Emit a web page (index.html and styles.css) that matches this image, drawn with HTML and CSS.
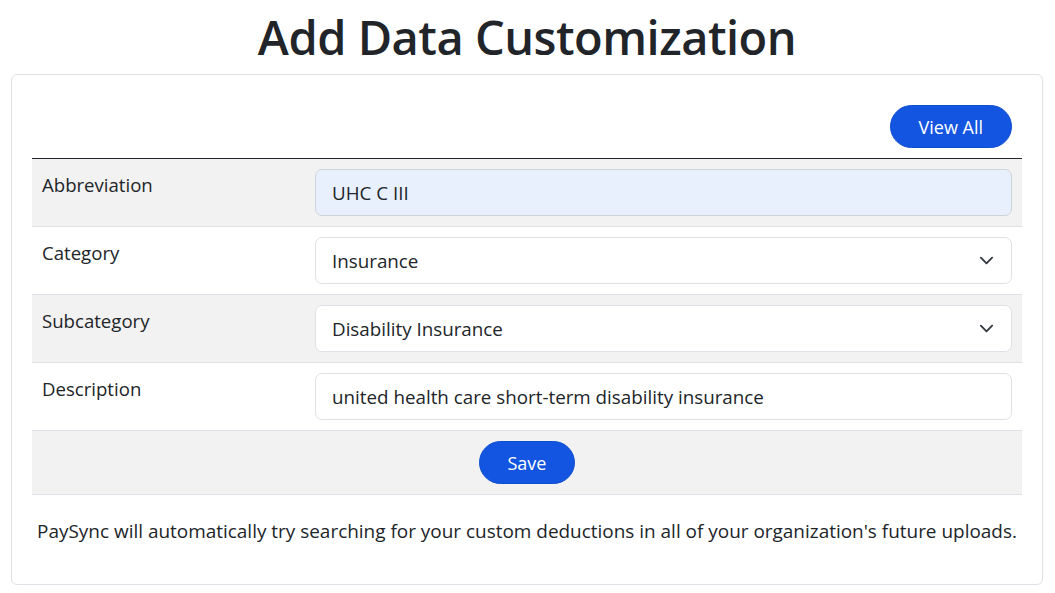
FILE: index.html
```html
<!DOCTYPE html>
<html lang="en">
<head>
<meta charset="utf-8">
<title>Add Data Customization</title>
<link rel="stylesheet" href="styles.css">
</head>
<body>
<main class="page">
  <h1 class="page-title">Add Data Customization</h1>
  <section class="card">
    <div class="toolbar">
      <button class="btn-pill" type="button">View All</button>
    </div>
    <table class="form-table">
      <tbody>
        <tr class="row striped">
          <td class="label-cell">Abbreviation</td>
          <td class="field-cell"><div class="field autofill">UHC C III</div></td>
        </tr>
        <tr class="row">
          <td class="label-cell">Category</td>
          <td class="field-cell"><div class="field select">Insurance<svg class="chev" viewBox="0 0 16 16"><path d="M2 5l6 6 6-6" fill="none" stroke="#343a40" stroke-width="2" stroke-linecap="round" stroke-linejoin="round"/></svg></div></td>
        </tr>
        <tr class="row striped">
          <td class="label-cell">Subcategory</td>
          <td class="field-cell"><div class="field select">Disability Insurance<svg class="chev" viewBox="0 0 16 16"><path d="M2 5l6 6 6-6" fill="none" stroke="#343a40" stroke-width="2" stroke-linecap="round" stroke-linejoin="round"/></svg></div></td>
        </tr>
        <tr class="row">
          <td class="label-cell">Description</td>
          <td class="field-cell"><div class="field">united health care short-term disability insurance</div></td>
        </tr>
        <tr class="row striped">
          <td class="save-cell" colspan="2"><button class="btn-pill save" type="button">Save</button></td>
        </tr>
      </tbody>
    </table>
    <p class="note">PaySync will automatically try searching for your custom deductions in all of your organization's future uploads.</p>
  </section>
</main>
</body>
</html>
```

FILE: styles.css
```css
* { box-sizing: border-box; }
html, body { margin: 0; padding: 0; background: #fff; }
body {
  font-family: "Open Sans", "Noto Sans", sans-serif;
  color: #212529;
  font-size: 19px;
}
.page {
  padding: 8px 12px 8px 11px;
}
.page-title {
  margin: 0 0 8px;
  text-align: center;
  font-size: 47px;
  font-weight: 600;
  line-height: 58px;
  letter-spacing: -0.5px;
}
.card {
  border: 1px solid #dee2e6;
  border-radius: 6px;
  padding: 20px 20px 19px;
}
.toolbar {
  display: flex;
  justify-content: flex-end;
  padding: 10px 10px 10px 0;
}
.btn-pill {
  font-family: inherit;
  font-size: 18px;
  color: #fff;
  background: #1355e0;
  border: 1px solid #0f4fcf;
  border-radius: 22px;
  height: 43px;
  padding: 0 28px;
  cursor: pointer;
}
.btn-pill.save { padding: 0 28px; }
.form-table {
  width: 100%;
  border-collapse: collapse;
  border-top: 1px solid #212529;
}
.row { border-bottom: 1px solid #dee2e6; }
.row.striped { background: #f2f2f2; }
.label-cell {
  width: 273px;
  padding: 12px 10px 10px;
  vertical-align: top;
  line-height: 28px;
  font-size: 18.6px;
}
.field-cell { padding: 10px; }
.field {
  display: flex;
  align-items: center;
  height: 47px;
  padding: 0 16px;
  border: 1px solid #dee2e6;
  border-radius: 7px;
  background: #fff;
  font-size: 18.8px;
}
.field.autofill { background: #e8f0fe; border-color: #ced4da; }
.field.select { justify-content: space-between; }
.chev { width: 15px; height: 15px; margin-right: 1px; }
.save-cell {
  padding: 10px;
  text-align: center;
  height: 64px;
}
.note {
  margin: 22px 0 20px;
  text-align: center;
  font-size: 18.95px;
  line-height: 28px;
}
```
